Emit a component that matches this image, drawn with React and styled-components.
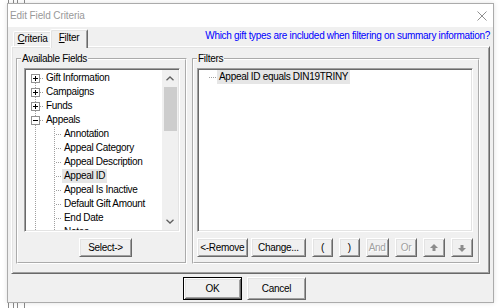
import React from 'react';
import styled, { createGlobalStyle, css } from 'styled-components';

const Global = createGlobalStyle`
  html, body { margin: 0; padding: 0; background: #fff; }
  body {
    width: 500px; height: 308px; overflow: hidden;
    font-family: "Liberation Sans", Arial, sans-serif;
  }
  * { box-sizing: border-box; }
`;

const Desktop = styled.div`
  position: relative;
  width: 500px;
  height: 308px;
  background: #fff;
  padding: 3px 0 0 7px;
`;

const BackWindow = styled.div`
  position: absolute;
  left: 8px;
  top: 0;
  width: 18px;
  height: 308px;
  background: linear-gradient(to right,
    #8a8a8a 0 1px, transparent 1px 5px,
    #8a8a8a 5px 6px, transparent 6px 9px,
    #8a8a8a 9px 10px, transparent 10px 16px,
    #8a8a8a 16px 17px, transparent 17px);
`;

const Window = styled.div`
  position: relative;
  z-index: 1;
  width: 487px;
  height: 300px;
  border: 1px solid #ababab;
  background: #f0f0f0;
  display: flex;
  flex-direction: column;
  box-shadow: 0 0 5px rgba(0, 0, 0, 0.12);
`;

const TitleBar = styled.div`
  height: 23px;
  background: #fff;
  display: flex;
  align-items: center;
  justify-content: space-between;
  padding: 0 6px 0 2px;
`;

const Title = styled.span`
  font-size: 10px;
  letter-spacing: -0.1px;
  color: #999;
`;

const Body = styled.div`
  flex: 1;
  display: flex;
  flex-direction: column;
  padding: 0 3px 2px 3px;
  font-size: 10px;
  letter-spacing: -0.3px;
  color: #000;
`;

const TabRow = styled.div`
  position: relative;
  z-index: 2;
  height: 19px;
  display: flex;
  align-items: flex-end;
  padding-left: 2px;
`;

const Tab = styled.div`
  width: ${p => p.$w}px;
  height: ${p => (p.$active ? 19 : 15)}px;
  margin-left: ${p => (p.$active ? -2 : 0)}px;
  margin-bottom: ${p => (p.$active ? -2 : 0)}px;
  padding-bottom: ${p => (p.$active ? 2 : 0)}px;
  background: #f0f0f0;
  border: 1px solid;
  border-bottom: none;
  border-color: #fff #696969 transparent #fff;
  border-radius: 2px 2px 0 0;
  box-shadow: inset 1px 1px 0 #e3e3e3, inset -1px 0 0 #a0a0a0;
  display: flex;
  align-items: center;
  justify-content: center;
  line-height: 12px;
`;

const Hint = styled.span`
  margin-left: auto;
  align-self: center;
  color: #0000ff;
  line-height: 12px;
  padding-bottom: 1px;
`;

const Panel = styled.div`
  position: relative;
  z-index: 1;
  height: 228px;
  border: 1px solid;
  border-color: #fff #696969 #696969 #fff;
  box-shadow: inset 1px 1px 0 #e3e3e3, inset -1px -1px 0 #a0a0a0;
  display: flex;
  align-items: flex-start;
  gap: 5px;
  padding: 6px 6px 0 4px;
`;

const Group = styled.fieldset`
  width: ${p => p.$w}px;
  margin: 0;
  min-width: 0;
  border: 2px groove #fff;
  padding: 3px 5px 5px 3px;
  display: flex;
  flex-direction: column;
`;

const Legend = styled.legend`
  padding: 0 1px;
  line-height: 12px;
  font-size: 10px;
`;

const sunken = css`
  border: 1px solid;
  border-color: #a0a0a0 #fff #fff #a0a0a0;
  box-shadow: inset 1px 1px 0 #696969, inset -1px -1px 0 #e3e3e3;
  background: #fff;
  padding: 1px;
`;

const TreeBox = styled.div`
  ${sunken};
  margin-left: 3px;
  width: 156px;
  height: 164px;
  display: flex;
`;

const ListBox = styled.div`
  ${sunken};
  width: 276px;
  height: 164px;
  display: flex;
  flex-direction: column;
`;

const Rows = styled.div`
  flex: 1;
  overflow: hidden;
  padding-top: ${p => p.$pad || 0}px;
  display: flex;
  flex-direction: column;
`;

const Row = styled.div`
  height: 14px;
  flex: none;
  display: flex;
  align-items: center;
  white-space: nowrap;
`;

const Label = styled.span`
  padding: 0 2px;
  line-height: 14px;
  background: ${p => (p.$selected ? '#e6e6e6' : 'transparent')};
`;

const Scrollbar = styled.div`
  width: 16px;
  background: #f0f0f0;
  display: flex;
  flex-direction: column;
  align-items: center;
`;

const ScrollArrow = styled.div`
  height: 17px;
  width: 100%;
  display: flex;
  align-items: center;
  justify-content: center;
  ${p => p.$bottom && 'margin-top: auto;'}
`;

const Thumb = styled.div`
  width: 13px;
  height: 44px;
  background: #cdcdcd;
`;

const ButtonRow = styled.div`
  display: flex;
  gap: 6px;
  margin-top: 6px;
  padding-left: ${p => p.$indent || 0}px;
`;

const Button = styled.button`
  font: inherit;
  letter-spacing: inherit;
  width: ${p => p.$w}px;
  height: ${p => p.$h || 19}px;
  margin: 0;
  margin-right: ${p => p.$mr || 0}px;
  padding: 0;
  background: #f0f0f0;
  color: ${p => (p.$disabled ? '#a0a0a0' : '#000')};
  text-shadow: ${p => (p.$disabled ? '1px 1px 0 #fff' : 'none')};
  display: flex;
  align-items: center;
  justify-content: center;
  border: 1px solid;
  ${p =>
    p.$default
      ? css`
          border-color: #000;
          box-shadow: inset 1px 1px 0 #fff, inset -1px -1px 0 #696969,
            inset 2px 2px 0 #e3e3e3, inset -2px -2px 0 #a0a0a0;
        `
      : css`
          border-color: #fff #696969 #696969 #fff;
          box-shadow: inset 1px 1px 0 #e3e3e3, inset -1px -1px 0 #a0a0a0;
        `}
`;

const Footer = styled.div`
  display: flex;
  gap: 5px;
  margin-top: 3px;
  padding-left: 172px;
`;

const dot = { stroke: '#a0a0a0', strokeDasharray: '1 1', shapeRendering: 'crispEdges' };

function Gutter({ level, box, first }) {
  const w = level === 0 ? 18 : 36;
  return (
    <svg width={w} height={14} viewBox={`0 0 ${w} 14`} style={{ flex: 'none' }}>
      <line x1="9.5" y1={first ? 8 : 0} x2="9.5" y2="14" {...dot} />
      {level === 0 ? (
        <>
          <line x1="14" y1="7.5" x2="18" y2="7.5" {...dot} />
          <rect x="5.5" y="3.5" width="8" height="8" fill="#fff" stroke="#919191" shapeRendering="crispEdges" />
          <line x1="7" y1="7.5" x2="12" y2="7.5" stroke="#000" shapeRendering="crispEdges" />
          {box === '+' && (
            <line x1="9.5" y1="5" x2="9.5" y2="10" stroke="#000" shapeRendering="crispEdges" />
          )}
        </>
      ) : (
        <>
          <line x1="28.5" y1="0" x2="28.5" y2="14" {...dot} />
          <line x1="30" y1="7.5" x2="36" y2="7.5" {...dot} />
        </>
      )}
    </svg>
  );
}

function Chevron({ down }) {
  return (
    <svg width="8" height="5" viewBox="0 0 8 5">
      <polyline
        points={down ? '0.5,0.8 4,4 7.5,0.8' : '0.5,4.2 4,1 7.5,4.2'}
        fill="none"
        stroke="#606060"
        strokeWidth="1.3"
      />
    </svg>
  );
}

function Arrow({ down }) {
  return (
    <svg width="8" height="8" viewBox="0 0 8 8" style={down ? { transform: 'scaleY(-1)' } : undefined}>
      <path d="M4 0 L8 4 L0 4 Z" fill="#8c8c8c" />
      <rect x="2.5" y="4" width="3" height="3" fill="#8c8c8c" />
    </svg>
  );
}

function CloseIcon() {
  return (
    <svg width="10" height="10" viewBox="0 0 10 10">
      <path d="M0.5 0.5 L9.5 9.5 M9.5 0.5 L0.5 9.5" stroke="#8f8f8f" strokeWidth="1" />
    </svg>
  );
}

const treeItems = [
  { label: 'Gift Information', level: 0, box: '+', first: true },
  { label: 'Campaigns', level: 0, box: '+' },
  { label: 'Funds', level: 0, box: '+' },
  { label: 'Appeals', level: 0, box: '-' },
  { label: 'Annotation', level: 1 },
  { label: 'Appeal Category', level: 1 },
  { label: 'Appeal Description', level: 1 },
  { label: 'Appeal ID', level: 1, selected: true },
  { label: 'Appeal Is Inactive', level: 1 },
  { label: 'Default Gift Amount', level: 1 },
  { label: 'End Date', level: 1 },
  { label: 'Notes', level: 1 },
];

export default function App() {
  return (
    <Desktop>
      <Global />
      <BackWindow />
      <Window>
        <TitleBar>
          <Title>Edit Field Criteria</Title>
          <CloseIcon />
        </TitleBar>
        <Body>
          <TabRow>
            <Tab $w={39}>
              <span>
                <u>C</u>riteria
              </span>
            </Tab>
            <Tab $w={38} $active>
              <span>
                <u>F</u>ilter
              </span>
            </Tab>
            <Hint>Which gift types are included when filtering on summary information?</Hint>
          </TabRow>
          <Panel>
            <Group $w={171}>
              <Legend>Available Fields</Legend>
              <TreeBox>
                <Rows $pad={1}>
                  {treeItems.map(it => (
                    <Row key={it.label}>
                      <Gutter level={it.level} box={it.box} first={it.first} />
                      <Label $selected={it.selected}>{it.label}</Label>
                    </Row>
                  ))}
                </Rows>
                <Scrollbar>
                  <ScrollArrow>
                    <Chevron />
                  </ScrollArrow>
                  <Thumb />
                  <ScrollArrow $bottom>
                    <Chevron down />
                  </ScrollArrow>
                </Scrollbar>
              </TreeBox>
              <ButtonRow $indent={58}>
                <Button $w={53}>Select-&gt;</Button>
              </ButtonRow>
            </Group>
            <Group $w={288}>
              <Legend>Filters</Legend>
              <ListBox>
                <Rows>
                  <Row>
                    <svg width="18" height="14" viewBox="0 0 18 14" style={{ flex: 'none' }}>
                      <line x1="10" y1="7.5" x2="18" y2="7.5" {...dot} />
                    </svg>
                    <Label $selected>Appeal ID equals DIN19TRINY</Label>
                  </Row>
                </Rows>
              </ListBox>
              <ButtonRow>
                <Button $w={51} $mr={-3}>&lt;-Remove</Button>
                <Button $w={56}>Change...</Button>
                <Button $w={21}>(</Button>
                <Button $w={21}>)</Button>
                <Button $w={23} $disabled>And</Button>
                <Button $w={23} $disabled>Or</Button>
                <Button $w={22}>
                  <Arrow />
                </Button>
                <Button $w={22}>
                  <Arrow down />
                </Button>
              </ButtonRow>
            </Group>
          </Panel>
          <Footer>
            <Button $w={59} $h={23} $default>OK</Button>
            <Button $w={59} $h={23}>Cancel</Button>
          </Footer>
        </Body>
      </Window>
    </Desktop>
  );
}
